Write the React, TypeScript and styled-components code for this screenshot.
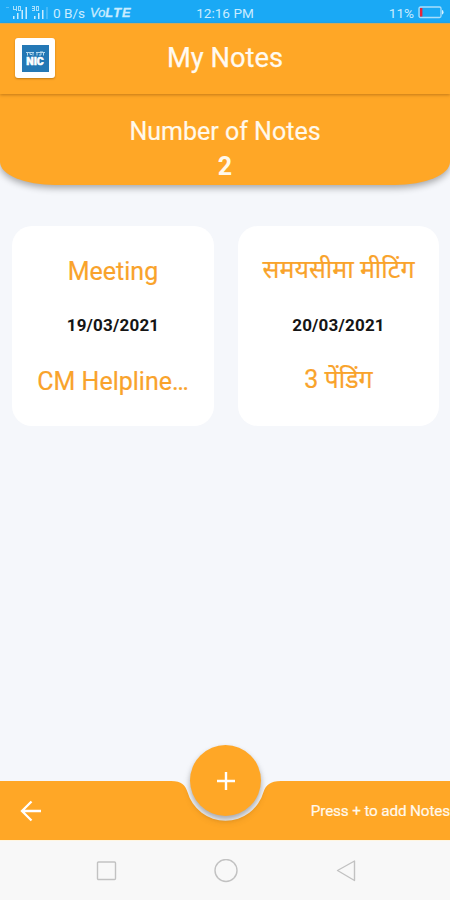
import React from "react";
import styled, { createGlobalStyle } from "styled-components";

const ORANGE = "#ffa726";

const GlobalStyle = createGlobalStyle`
  * { box-sizing: border-box; }
  html, body { margin: 0; padding: 0; }
  body { font-family: Roboto, "Noto Sans", "Liberation Sans", sans-serif; overflow: hidden; }
`;

const Screen = styled.div`
  width: 450px;
  height: 900px;
  display: flex;
  flex-direction: column;
  background: #f5f7fb;
  overflow: hidden;
`;

const StatusBar = styled.div`
  flex: none;
  height: 23px;
  display: grid;
  grid-template-columns: 1fr auto 1fr;
  align-items: center;
  padding: 2px 6px 0;
  background: #1aa9f5;
  color: #c9ecff;
  font-size: 13.6px;
  line-height: 20px;
  white-space: nowrap;
`;

const StatusGroup = styled.div<{ $end?: boolean }>`
  display: flex;
  align-items: center;
  justify-content: ${(p) => (p.$end ? "flex-end" : "flex-start")};
  gap: ${(p) => (p.$end ? "4px" : "5px")};
`;

const VoLte = styled.span`
  font-family: "Liberation Sans", sans-serif;
  font-style: italic;
  font-size: 12.8px;
  -webkit-text-stroke: 0.3px currentColor;
  b { letter-spacing: 1px; }
`;

const Header = styled.header`
  flex: none;
  position: relative;
  z-index: 2;
  height: 71px;
  display: grid;
  grid-template-columns: 40px 1fr 40px;
  align-items: center;
  padding: 0 15px;
  padding-bottom: 2px;
  background: ${ORANGE};
  border-top: 1px solid #d2a95c;
  box-shadow: 0 1px 3px rgba(110, 60, 0, 0.42);
`;

const LogoTile = styled.div`
  width: 40px;
  height: 40px;
  display: flex;
  align-items: center;
  justify-content: center;
  border-radius: 3px;
  background: #fff;
  box-shadow: 0 1px 2px rgba(100, 60, 0, 0.4);
`;

const Logo = styled.div`
  width: 27px;
  height: 27px;
  display: flex;
  flex-direction: column;
  align-items: center;
  justify-content: center;
  background: #2478b5;
  color: #fff;
`;

const LogoCaption = styled.svg`
  display: block;
  margin-bottom: 1px;
`;

const LogoName = styled.span`
  font: 900 10.5px/9px Roboto, sans-serif;
  -webkit-text-stroke: 0.5px #fff;
`;

const Title = styled.h1`
  margin: 0;
  text-align: center;
  color: #fffaf0;
  font-size: 27.3px;
  font-weight: 400;
  line-height: 32px;
  -webkit-text-stroke: 0.25px currentColor;
`;

const Summary = styled.section`
  flex: none;
  height: 91px;
  padding-top: 22px;
  text-align: center;
  color: #fff9ec;
  background: ${ORANGE};
  border-radius: 0 0 55px 55px / 0 0 23px 23px;
  box-shadow: 0 3px 7px rgba(0, 0, 0, 0.33);
`;

const SummaryLabel = styled.div`
  font-size: 25px;
  line-height: 31px;
  -webkit-text-stroke: 0.2px currentColor;
`;

const SummaryCount = styled.div`
  font-size: 25px;
  line-height: 30px;
  font-weight: 700;
  margin-top: 5px;
`;

const Notes = styled.main`
  flex: 1;
  display: grid;
  grid-template-columns: 202px 201px;
  grid-template-rows: 200px;
  column-gap: 24px;
  padding: 41px 12px 0;
`;

const NoteCard = styled.article`
  display: grid;
  grid-template-rows: 42px 24px 42px;
  row-gap: 20px;
  justify-items: center;
  align-items: center;
  padding-top: 25px;
  align-content: start;
  border-radius: 20px;
  background: #fff;
`;

const NoteText = styled.div<{ $hindi?: boolean; $body?: boolean }>`
  color: #f9a32b;
  font-size: 25px;
  line-height: 42px;
  margin-top: ${(p) => (p.$body ? (p.$hindi ? "3px" : "7px") : p.$hindi ? "-5px" : "-1px")};
  white-space: nowrap;
  -webkit-text-stroke: 0.2px currentColor;
`;

const NoteDate = styled.time`
  color: #151515;
  font-size: 17px;
  font-weight: 700;
  line-height: 24px;
  letter-spacing: 0.2px;
`;

const BottomArea = styled.footer`
  flex: none;
  position: relative;
  height: 59px;
`;

const BottomBar = styled.div`
  height: 59px;
  display: flex;
  align-items: center;
  justify-content: space-between;
  padding: 0 0 0 18px;
  color: #fff9ec;
  background: ${ORANGE};
  clip-path: path("M0 0H171C182 0 185 4 187.5 11A39.5 39.5 0 0 0 263.5 11C266 4 270 0 281 0H450V60H0Z");
`;

const Hint = styled.span`
  font-size: 15.3px;
  line-height: 20px;
  letter-spacing: -0.15px;
  white-space: nowrap;
  -webkit-text-stroke: 0.2px currentColor;
`;

const AddButton = styled.button`
  position: absolute;
  left: 190px;
  top: -36px;
  width: 71px;
  height: 71px;
  display: flex;
  align-items: center;
  justify-content: center;
  padding: 0;
  border: 0;
  border-radius: 50%;
  color: #fff;
  background: ${ORANGE};
  box-shadow: 0 3px 5px rgba(0, 0, 0, 0.22), 0 5px 9px rgba(0, 0, 0, 0.12);
`;

const SystemNav = styled.nav`
  flex: none;
  height: 60px;
  display: grid;
  grid-template-columns: 24px 24px 24px;
  column-gap: 96px;
  align-items: center;
  justify-content: center;
  padding-left: 1px;
  background: #f8f8f8;
  border-top: 1px solid #fff6e2;
`;

const SignalIcon = () => (
  <svg width="42" height="14" viewBox="0 0 42 14" fill="currentColor">
    <path d="M0 1h3v1H0z" opacity=".35" />
    <path d="M7 0h1v3h2V0h1v5h-1V4H7zM12 0h3v5h-3zM13 1v3h1V1z" fillRule="evenodd" opacity=".8" />
    <path d="M7 10h1.500v3H7zM11 7h1.500v6H11zM15.500 4H17v9h-1.500zM19.500 1H21v12h-1.500z" />
    <path d="M26 0h3v5h-3V4h2V3h-2V2h2V1h-2zM30 0h3v5h-3zM31 1v3h1V1z" fillRule="evenodd" opacity=".8" />
    <path d="M28 10h1.500v3H28zM32 7h1.500v6H32zM36 4h1.500v9H36z" />
    <path d="M40.500 1h1v12h-1z" opacity=".5" />
  </svg>
);

const BatteryIcon = () => (
  <svg width="26" height="13" viewBox="0 0 26 13" fill="none">
    <rect x="1" y="1" width="22" height="10.5" rx="1.5" stroke="#a9defb" strokeWidth="1.3" />
    <path d="M24 4q1.500 0 1.500 2.300T24 8.600" fill="#d9f2ff" />
    <path d="M2 2h2.400v8.500H2z" fill="#e8243a" />
  </svg>
);

const notes = [
  { title: "Meeting", date: "19/03/2021", body: "CM Helpline…", hindi: false },
  { title: "समयसीमा मीटिंग", date: "20/03/2021", body: "3 पेंडिंग", hindi: true },
];

export default function App() {
  return (
    <>
      <GlobalStyle />
      <Screen>
        <StatusBar>
          <StatusGroup>
            <SignalIcon />
            <span>0 B/s</span>
            <VoLte>Vo<b>LTE</b></VoLte>
          </StatusGroup>
          <span>12:16 PM</span>
          <StatusGroup $end>
            <span>11%</span>
            <BatteryIcon />
          </StatusGroup>
        </StatusBar>
        <Header>
          <LogoTile>
            <Logo>
              <LogoCaption width="19" height="5" viewBox="0 0 19 5" fill="none" stroke="#b7d8ec" strokeWidth="1">
                <path d="M0 1.500h8M1.500 1.500v3M4 1.500v2h2M7 1.500v3M10 1.500h9M11 1.500v3M13 4h2v-2.500M17.500 1.500v3M14 0h3" />
              </LogoCaption>
              <LogoName>NIC</LogoName>
            </Logo>
          </LogoTile>
          <Title>My Notes</Title>
        </Header>
        <Summary>
          <SummaryLabel>Number of Notes</SummaryLabel>
          <SummaryCount>2</SummaryCount>
        </Summary>
        <Notes>
          {notes.map((n) => (
            <NoteCard key={n.date}>
              <NoteText $hindi={n.hindi}>{n.title}</NoteText>
              <NoteDate>{n.date}</NoteDate>
              <NoteText $hindi={n.hindi} $body>{n.body}</NoteText>
            </NoteCard>
          ))}
        </Notes>
        <BottomArea>
          <BottomBar>
            <svg width="26" height="26" viewBox="0 0 26 26" fill="none" stroke="#fff" strokeWidth="2.3">
              <path d="M13.500 3.500L4 13l9.500 9.500M4 13h19" />
            </svg>
            <Hint>Press + to add Notes</Hint>
          </BottomBar>
          <AddButton aria-label="Add note">
            <svg width="20" height="20" viewBox="0 0 20 20" stroke="currentColor" strokeWidth="2.4">
              <path d="M10 1v18M1 10h18" />
            </svg>
          </AddButton>
        </BottomArea>
        <SystemNav>
          <svg width="24" height="24" viewBox="0 0 24 24" fill="none" stroke="#c2c2c2" strokeWidth="1.4">
            <rect x="3.500" y="3" width="18" height="17.500" rx="1" />
          </svg>
          <svg width="24" height="24" viewBox="0 0 24 24" fill="none" stroke="#c2c2c2" strokeWidth="1.4">
            <circle cx="12" cy="11.500" r="11" />
          </svg>
          <svg width="24" height="24" viewBox="0 0 24 24" fill="none" stroke="#c2c2c2" strokeWidth="1.4" strokeLinejoin="round">
            <path d="M3.500 11.500L20.500 2v19.500z" />
          </svg>
        </SystemNav>
      </Screen>
    </>
  );
}
